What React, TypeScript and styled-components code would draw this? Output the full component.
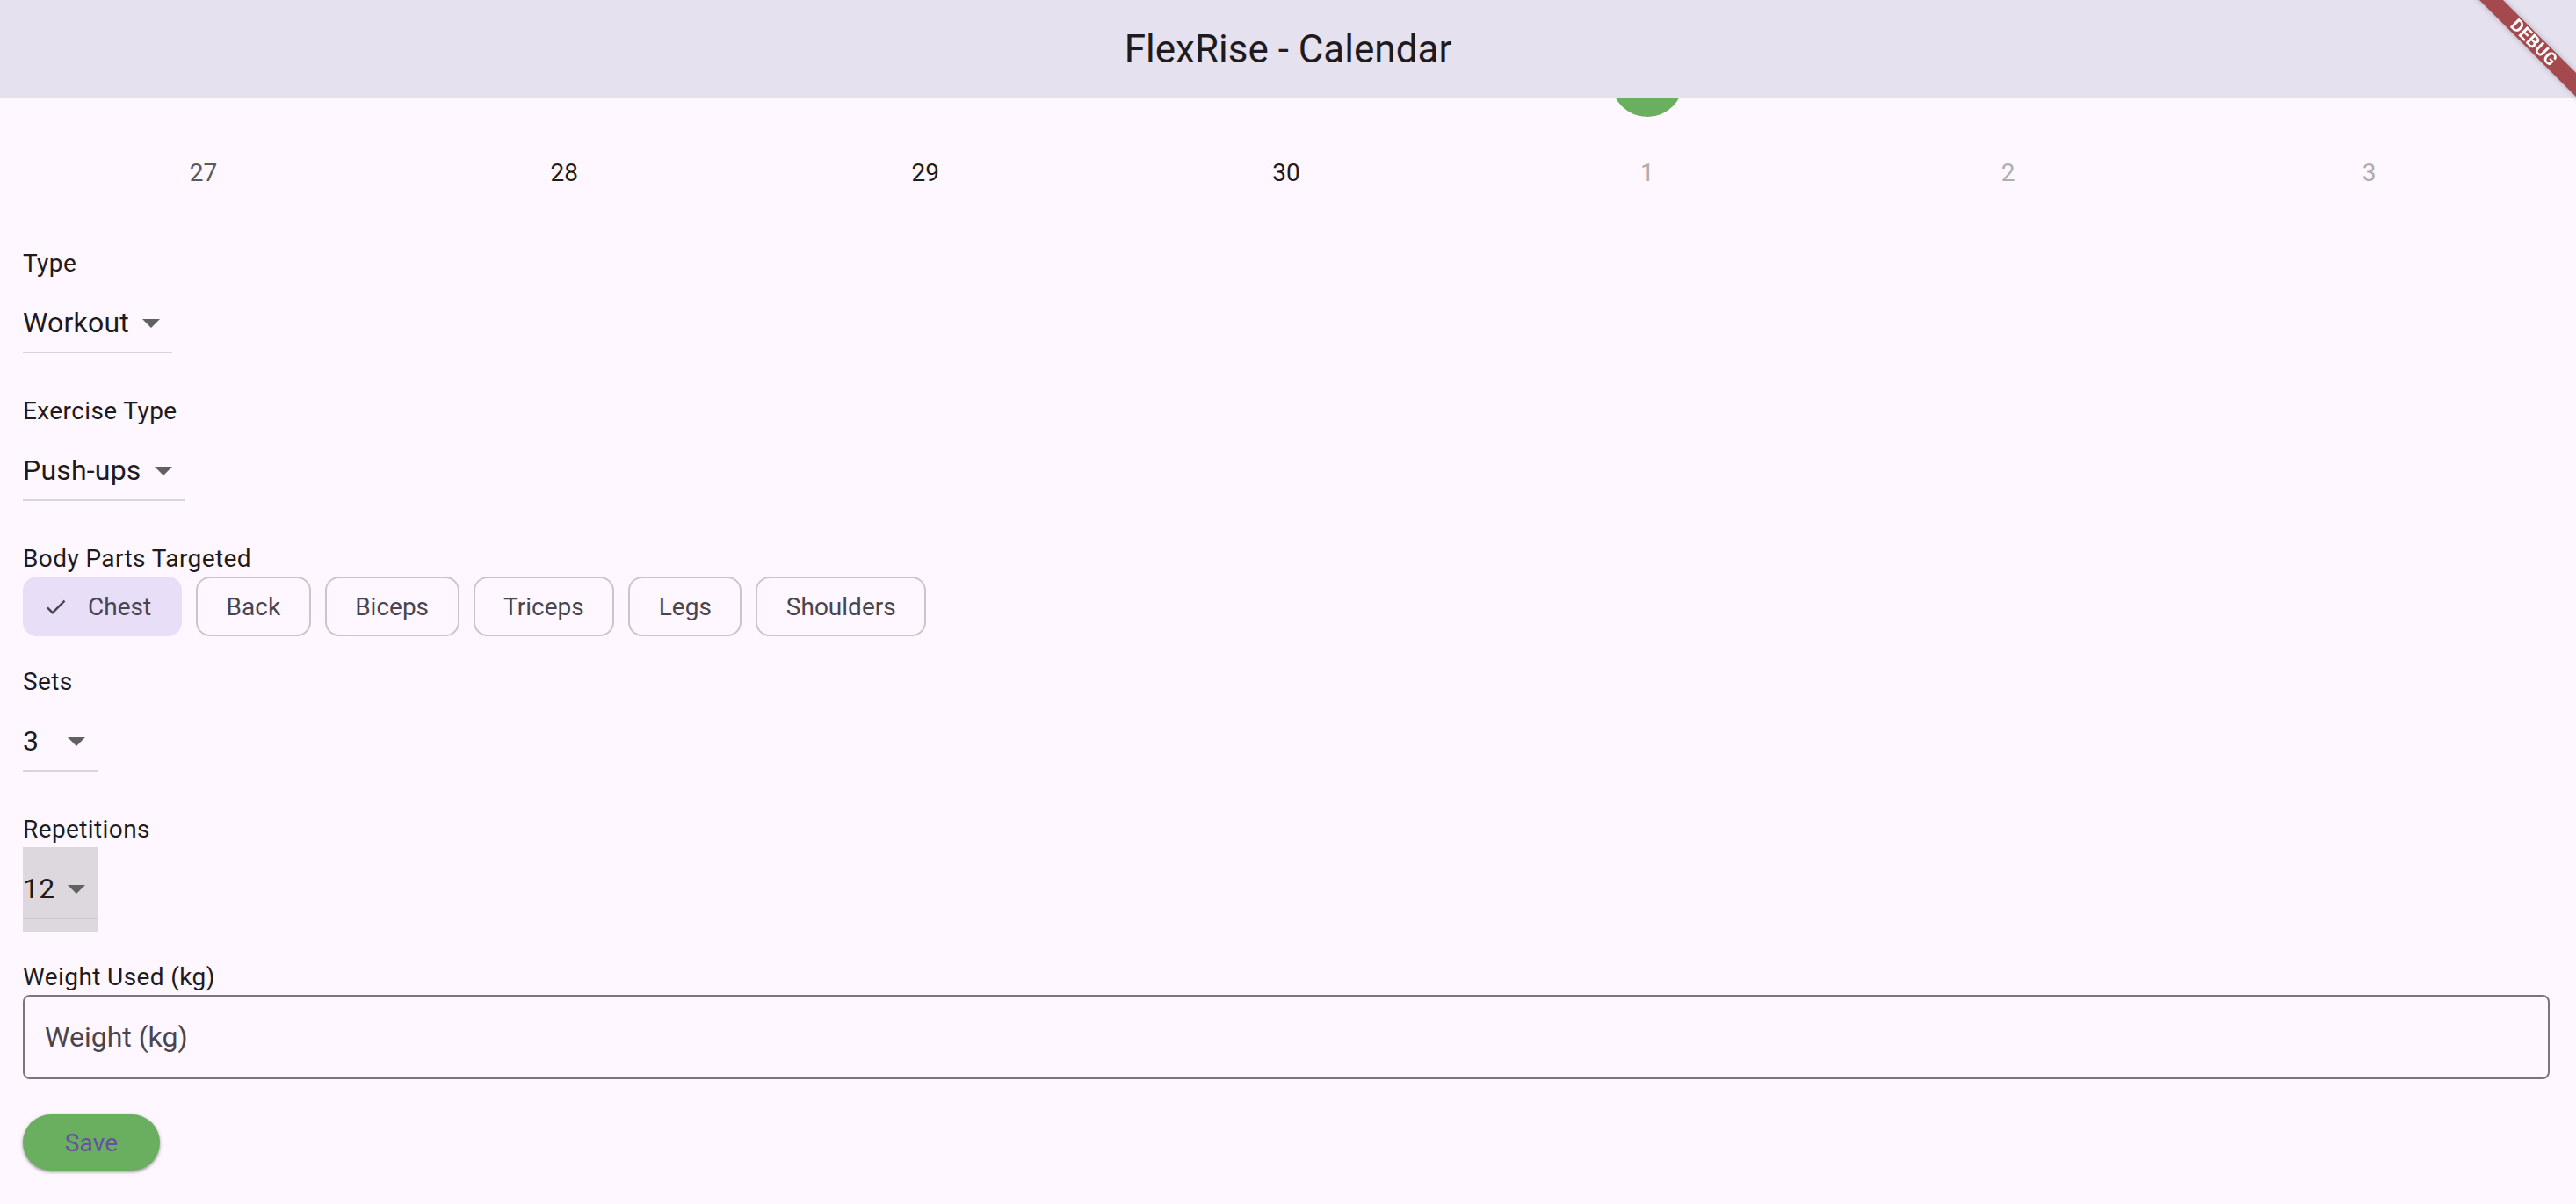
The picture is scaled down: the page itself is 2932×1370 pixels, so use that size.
import React from "react";
import styled, { createGlobalStyle } from "styled-components";

const GlobalStyle = createGlobalStyle`
  html, body {
    margin: 0;
    padding: 0;
    background: #fef7ff;
  }
  body {
    font-family: Roboto, "Noto Sans", "Liberation Sans", sans-serif;
    color: #1d1b20;
  }
`;

type Tone = "normal" | "weekend" | "outside";
type Day = { n: number; tone?: Tone; marked?: boolean };

// the week above has scrolled under the app bar, only the day marker peeks out
const hiddenWeek: Day[] = [
  { n: 20 },
  { n: 21 },
  { n: 22 },
  { n: 23 },
  { n: 24, marked: true },
  { n: 25 },
  { n: 26 },
];

const lastWeek: Day[] = [
  { n: 27, tone: "weekend" },
  { n: 28 },
  { n: 29 },
  { n: 30 },
  { n: 1, tone: "outside" },
  { n: 2, tone: "outside" },
  { n: 3, tone: "outside" },
];

const bodyParts = ["Chest", "Back", "Biceps", "Triceps", "Legs", "Shoulders"];

const toneColor: Record<Tone, string> = {
  normal: "#1d1b20",
  weekend: "#5a5a5a",
  outside: "#aeaeae",
};

// ---- app bar + debug ribbon (overlay the scrolled content) ----
const AppBar = styled.header`
  position: fixed;
  top: 0;
  left: 0;
  right: 0;
  height: 112px;
  z-index: 10;
  background: #e6e1ee;
  display: flex;
  align-items: center;
  justify-content: center;
`;

const Title = styled.h1`
  margin: 0;
  font-size: 44px;
  font-weight: 400;
  color: #1d1b20;
  letter-spacing: 0;
`;

const BannerCorner = styled.div`
  position: fixed;
  top: 0;
  right: 0;
  width: 150px;
  height: 150px;
  overflow: hidden;
  z-index: 20;
  pointer-events: none;
`;

const Ribbon = styled.div`
  position: absolute;
  left: 1.5px;
  top: 39px;
  width: 200px;
  height: 19px;
  transform: rotate(45deg);
  background: rgba(140, 20, 22, 0.74);
  box-shadow: 0 0 6px rgba(0, 0, 0, 0.25);
  color: #fff;
  font-family: Roboto, "Liberation Sans", sans-serif;
  font-weight: 700;
  font-size: 20px;
  line-height: 19px;
  letter-spacing: 0.5px;
  text-align: center;
`;

// ---- page ----
const Page = styled.main`
  padding: 40px 30px 40px 26px;
`;

const WeekRow = styled.div`
  display: grid;
  grid-template-columns: repeat(7, 1fr);
  height: 104px;
`;

const DayCell = styled.div<{ $tone: Tone }>`
  display: flex;
  align-items: center;
  justify-content: center;
  font-size: 28px;
  color: ${(p) => toneColor[p.$tone]};
`;

const Marker = styled.div`
  width: 82px;
  height: 82px;
  border-radius: 50%;
  background: #6aaf5f;
`;

const Form = styled.section`
  display: flex;
  flex-direction: column;
  margin-top: 34px;
`;

const Field = styled.div`
  display: flex;
  flex-direction: column;
  align-items: flex-start;
  & + & {
    margin-top: 34px;
  }
`;

const Label = styled.label`
  font-size: 28px;
  line-height: 36px;
  letter-spacing: 0.4px;
  color: #1d1b20;
  margin-bottom: 2px;
`;

const DropBox = styled.div<{ $focused?: boolean }>`
  height: 96px;
  box-sizing: border-box;
  padding-top: 14px;
  background: ${(p) => (p.$focused ? "#ddd8de" : "transparent")};
`;

const DropRow = styled.div<{ $focused?: boolean }>`
  display: flex;
  align-items: center;
  height: 66px;
  border-bottom: 2px solid ${(p) => (p.$focused ? "#cdc9ce" : "#d7d4da")};
`;

const DropValue = styled.span<{ $w: number }>`
  width: ${(p) => p.$w}px;
  font-size: 32px;
  letter-spacing: 0.2px;
  color: #1d1b20;
  white-space: nowrap;
`;

const ArrowIcon = styled.svg`
  width: 48px;
  height: 48px;
  flex: none;
`;

const ChipRow = styled.div`
  display: flex;
  gap: 16px;
`;

const Chip = styled.button<{ $selected?: boolean }>`
  height: 68px;
  box-sizing: border-box;
  display: inline-flex;
  align-items: center;
  padding: ${(p) => (p.$selected ? "0 33px 0 21px" : "0 32.5px")};
  border-radius: 16px;
  border: 2px solid ${(p) => (p.$selected ? "transparent" : "#cac4d0")};
  background: ${(p) => (p.$selected ? "#e8def8" : "transparent")};
  font-family: Roboto, "Liberation Sans", sans-serif;
  font-size: 28px;
  color: #49454f;
  cursor: pointer;
`;

const CheckIcon = styled.svg`
  width: 29px;
  height: 29px;
  margin-right: 22px;
  flex: none;
`;

const WeightInput = styled.input`
  width: 100%;
  height: 96px;
  box-sizing: border-box;
  border: 2px solid #79747e;
  border-radius: 8px;
  background: transparent;
  padding: 0 23px;
  font-family: Roboto, "Liberation Sans", sans-serif;
  font-size: 32px;
  color: #1d1b20;
  outline: none;
  &::placeholder {
    color: #49454f;
  }
`;

const SaveButton = styled.button`
  margin-top: 40px;
  align-self: flex-start;
  width: 156px;
  height: 64px;
  border: none;
  border-radius: 32px;
  background: #6aaf5f;
  color: #6750a4;
  font-family: Roboto, "Liberation Sans", sans-serif;
  font-size: 28px;
  font-weight: 400;
  letter-spacing: 0.2px;
  box-shadow: 0 2px 3px rgba(0, 0, 0, 0.28), 0 1px 4px 1px rgba(0, 0, 0, 0.12);
  cursor: pointer;
`;

const Arrow = () => (
  <ArrowIcon viewBox="0 0 24 24" aria-hidden>
    <path d="M7 10l5 5 5-5z" fill="#616161" />
  </ArrowIcon>
);

const Dropdown: React.FC<{ value: string; width: number; focused?: boolean }> = ({ value, width, focused }) => (
  <DropBox $focused={focused}>
    <DropRow $focused={focused}>
      <DropValue $w={width}>{value}</DropValue>
      <Arrow />
    </DropRow>
  </DropBox>
);

const Week: React.FC<{ days: Day[]; hidden?: boolean }> = ({ days, hidden }) => (
  <WeekRow>
    {days.map((d) => (
      <DayCell key={d.n} $tone={d.tone ?? "normal"}>
        {d.marked ? <Marker /> : hidden ? null : d.n}
      </DayCell>
    ))}
  </WeekRow>
);

export default function App() {
  return (
    <>
      <GlobalStyle />
      <AppBar>
        <Title>FlexRise - Calendar</Title>
      </AppBar>
      <BannerCorner>
        <Ribbon>DEBUG</Ribbon>
      </BannerCorner>
      <Page>
        <Week days={hiddenWeek} hidden />
        <Week days={lastWeek} />
        <Form>
          <Field>
            <Label>Type</Label>
            <Dropdown value="Workout" width={122} />
          </Field>
          <Field>
            <Label>Exercise Type</Label>
            <Dropdown value="Push-ups" width={136} />
          </Field>
          <Field>
            <Label>Body Parts Targeted</Label>
            <ChipRow>
              {bodyParts.map((part, i) => (
                <Chip key={part} $selected={i === 0}>
                  {i === 0 && (
                    <CheckIcon viewBox="0 0 24 24" aria-hidden>
                      <path d="M9 16.17L4.83 12l-1.42 1.41L9 19 21 7l-1.41-1.41z" fill="#49454f" />
                    </CheckIcon>
                  )}
                  {part}
                </Chip>
              ))}
            </ChipRow>
          </Field>
          <Field>
            <Label>Sets</Label>
            <Dropdown value="3" width={37} />
          </Field>
          <Field>
            <Label>Repetitions</Label>
            <Dropdown value="12" width={37} focused />
          </Field>
          <Field>
            <Label>Weight Used (kg)</Label>
            <WeightInput placeholder="Weight (kg)" />
          </Field>
          <SaveButton>Save</SaveButton>
        </Form>
      </Page>
    </>
  );
}
